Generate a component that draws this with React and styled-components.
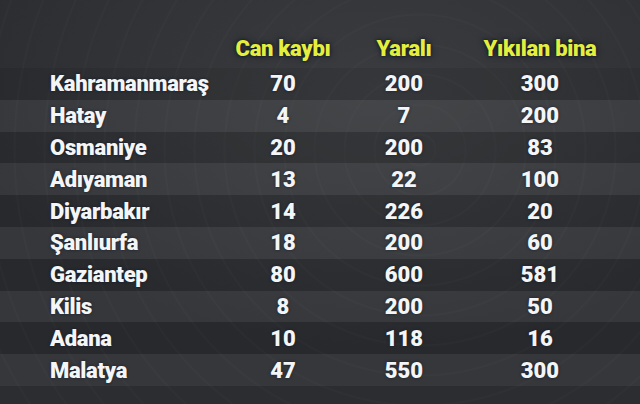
import React from "react";
import styled, { createGlobalStyle } from "styled-components";

const rows = [
    { city: "Kahramanmaraş", dead: 70, injured: 200, ruined: 300 },
    { city: "Hatay", dead: 4, injured: 7, ruined: 200 },
    { city: "Osmaniye", dead: 20, injured: 200, ruined: 83 },
    { city: "Adıyaman", dead: 13, injured: 22, ruined: 100 },
    { city: "Diyarbakır", dead: 14, injured: 226, ruined: 20 },
    { city: "Şanlıurfa", dead: 18, injured: 200, ruined: 60 },
    { city: "Gaziantep", dead: 80, injured: 600, ruined: 581 },
    { city: "Kilis", dead: 8, injured: 200, ruined: 50 },
    { city: "Adana", dead: 10, injured: 118, ruined: 16 },
    { city: "Malatya", dead: 47, injured: 550, ruined: 300 },
];

const GlobalStyle = createGlobalStyle`
    html, body {
        margin: 0;
        padding: 0;
        background: #2e3033;
    }
`;

const S = {
    Board: styled.div`
        width: 640px;
        height: 404px;
        overflow: hidden;
        box-sizing: border-box;
        padding-top: 32px;
        font-family: Roboto, "Liberation Sans", sans-serif;
        font-weight: 900;
        font-size: 22px;
        color: #f4f5f6;
        background:
            repeating-radial-gradient(circle at 420px 150px, rgba(255,255,255,0) 0 14px, rgba(255,255,255,0.015) 15px 16px, rgba(255,255,255,0) 17px 30px),
            radial-gradient(ellipse 420px 260px at 380px 90px, #3a3c40 0%, #323437 55%, #2b2d30 100%);
    `,
    Header: styled.div`
        display: grid;
        grid-template-columns: 173px 120px 122px 150px;
        padding-left: 50px;
        height: 32px;
        align-items: center;
        margin-bottom: 4px;
    `,
    HeadCell: styled.div`
        text-align: center;
        color: #e4ef3d;
        letter-spacing: -0.3px;
        text-shadow: 0 0 3px rgba(12, 18, 40, 0.9), 0 0 6px rgba(12, 18, 40, 0.6);
    `,
    Row: styled.div`
        display: grid;
        grid-template-columns: 173px 120px 122px 150px;
        padding-left: 50px;
        height: 31.8px;
        align-items: center;
        background: ${props => props.$light ? "rgba(255,255,255,0.05)" : "rgba(0,0,0,0.07)"};
    `,
    City: styled.div`
        letter-spacing: -0.3px;
        text-shadow: 0 0 3px rgba(12, 18, 40, 0.7);
        white-space: nowrap;
    `,
    Num: styled.div`
        text-align: center;
        text-shadow: 0 0 3px rgba(12, 18, 40, 0.7);
    `,
};

export default function App() {
    return (
        <>
            <GlobalStyle />
            <S.Board>
                <S.Header>
                    <div />
                    <S.HeadCell>Can kaybı</S.HeadCell>
                    <S.HeadCell>Yaralı</S.HeadCell>
                    <S.HeadCell>Yıkılan bina</S.HeadCell>
                </S.Header>
                {rows.map((r, i) => (
                    <S.Row key={r.city} $light={i % 2 === 1}>
                        <S.City>{r.city}</S.City>
                        <S.Num>{r.dead}</S.Num>
                        <S.Num>{r.injured}</S.Num>
                        <S.Num>{r.ruined}</S.Num>
                    </S.Row>
                ))}
            </S.Board>
        </>
    );
}
